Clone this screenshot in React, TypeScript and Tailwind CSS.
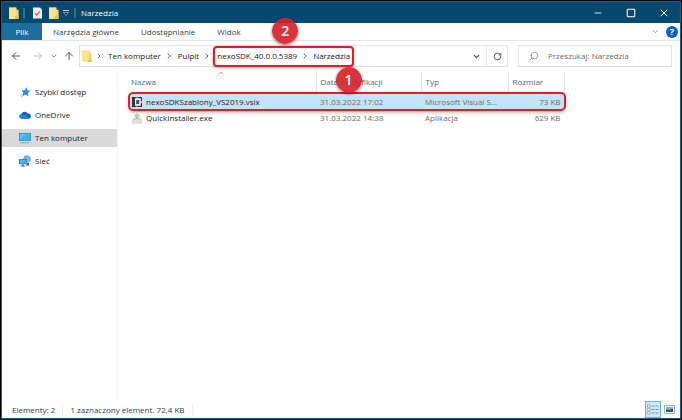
import type { ReactNode } from 'react';
import { ArrowLeft, ArrowRight, ArrowUp, ChevronDown, ChevronRight, ChevronUp, Minus, RotateCw, Search, Square, X } from 'lucide-react';
import clsx from 'clsx';

interface FileEntry {
  name: string;
  modified: string;
  type: string;
  size: string;
  icon: ReactNode;
  selected?: boolean;
}

function FolderIcon() {
  return (
    <svg viewBox="0 0 10 12" className="h-3 w-2.5 shrink-0" aria-hidden>
      <path d="M0 0.6h7.6v2.2H9.6V12H0z" fill="#f6d774" />
      <path d="M0 0.6h6.8V12H0z" fill="#fde291" />
      <path d="M6.8 8.5h2.8V12H5.4z" fill="#edc65a" />
    </svg>
  );
}

function PropertiesIcon() {
  return (
    <svg viewBox="0 0 9 12" className="h-3 w-[9px] shrink-0" aria-hidden>
      <path d="M0 0.5h7l2 2v9H0z" fill="#f4f1ee" />
      <path d="M7 0.5v2h2" fill="#b9c2c9" />
      <path d="M2 6.2l1.8 2L7 4.2" fill="none" stroke="#e0623f" strokeWidth="1.3" />
      <path d="M2 10h5" stroke="#c9c4c0" strokeWidth="0.6" />
    </svg>
  );
}

function StarIcon() {
  return (
    <svg viewBox="0 0 12 12" className="size-3" aria-hidden>
      <path d="M7.6 1l.8 3.2 3.3.6-2.8 2 .6 3.7-2.9-1.9-3.2 1.6 1-3.4-2.2-2.4 3.4-.2z" fill="#2594dc" />
      <path d="M3 7.8L1.4 9.2M3.6 10L2.2 11.2" stroke="#69b9e8" strokeWidth="1" />
    </svg>
  );
}

function CloudIcon() {
  return (
    <svg viewBox="0 0 12 12" className="size-3" aria-hidden>
      <path d="M2.6 9.8a2.5 2.5 0 0 1-.2-4.9A3.5 3.5 0 0 1 8.8 4.6a2.6 2.6 0 0 1 .8 5.2z" fill="#0f62b8" />
      <path d="M2.6 9.8a2.5 2.5 0 0 1-1.8-4l5.4.2 5 3-1.6.8z" fill="#1684d8" />
    </svg>
  );
}

function ComputerIcon() {
  return (
    <svg viewBox="0 0 12 12" className="size-3" aria-hidden>
      <path d="M0 1h12v8H0z" fill="#2587c4" />
      <path d="M.7 1.7h10.6v6.6H.7z" fill="#58c1f5" />
      <path d="M.7 8.3L8 1.7h3.3v6.6z" fill="#43aeea" />
      <path d="M1.5 10.8h9" stroke="#8aa0ad" strokeWidth="1" />
    </svg>
  );
}

function NetworkIcon() {
  return (
    <svg viewBox="0 0 12 12" className="size-3" aria-hidden>
      <circle cx="8" cy="4" r="3.8" fill="#62b4df" />
      <path d="M8 .2c2 1.2 2.6 5 .6 7.6" fill="none" stroke="#9fd4ee" strokeWidth="0.7" />
      <path d="M0 4.2h7.4v5H0z" fill="#1f6f9f" />
      <path d="M.7 4.9h6v3.6h-6z" fill="#4bb9ee" />
      <path d="M3.2 9.2h1.4v1.4h1.6v.8H1.6v-.8h1.6z" fill="#3d6c88" />
      <path d="M8 8h2v2.6H7z" fill="#1c6aa4" />
    </svg>
  );
}

function VsixIcon() {
  return (
    <svg viewBox="0 0 10 10" className="size-2.5 shrink-0" aria-hidden>
      <path d="M0 0h4.6v1.4H3v7.2h1.6V10H0z" fill="#33383d" />
      <path d="M5.4 0H10v4.4H8.6V1.4H5.4zM8.6 6H10v4H5.4V8.6h3.2z" fill="#33383d" />
      <path d="M3 1.4h5.6v7.2H3z" fill="#e8f1f8" />
      <path d="M4.2 3h3v4h-3z" fill="#4a5157" />
    </svg>
  );
}

function InstallerIcon() {
  return (
    <svg viewBox="0 0 10 11" className="h-[11px] w-2.5 shrink-0" aria-hidden>
      <path d="M1 5h8l1 2v3.5H0V7z" fill="#cfd3d4" />
      <path d="M1.2 7.3h7.6v2H1.2z" fill="#e6e8e8" />
      <path d="M3.4 5.8V3.6H1.6L5 .2l3.4 3.4H6.6v2.2z" fill="#a9d49b" />
    </svg>
  );
}

function DetailsViewIcon() {
  return (
    <svg viewBox="0 0 12 11" className="h-[11px] w-3" aria-hidden>
      <g fill="#fff" stroke="#8a969d" strokeWidth="0.7">
        <path d="M.5.8H3v2.4H.5zM.5 4.3H3v2.4H.5z" />
        <path d="M.5 7.8H3v2.4H.5z" stroke="#d28783" />
      </g>
      <path d="M4.5 2h3M8.5 2h3M4.5 5.5h3M8.5 5.5h3M4.5 9h3M8.5 9h3" stroke="#7f99a7" strokeWidth="1" />
    </svg>
  );
}

function ThumbnailViewIcon() {
  return (
    <svg viewBox="0 0 11 9" className="h-[9px] w-[11px]" aria-hidden>
      <path d="M.5.5h10v8H.5z" fill="#fff" stroke="#a9afb3" />
      <path d="M2 2h7v2.6H2z" fill="#6fb3e0" />
      <path d="M2 4.3l3 .4 4-1V7H2z" fill="#31566b" />
    </svg>
  );
}

const FILES: FileEntry[] = [
  {
    name: 'nexoSDKSzablony_VS2019.vsix',
    modified: '31.03.2022 17:02',
    type: 'Microsoft Visual S...',
    size: '73 KB',
    icon: <VsixIcon />,
    selected: true,
  },
  { name: 'QuickInstaller.exe', modified: '31.03.2022 14:38', type: 'Aplikacja', size: '629 KB', icon: <InstallerIcon /> },
];

const PLACES = [
  { label: 'Szybki dostęp', icon: <StarIcon /> },
  { label: 'OneDrive', icon: <CloudIcon /> },
  { label: 'Ten komputer', icon: <ComputerIcon />, active: true },
  { label: 'Sieć', icon: <NetworkIcon /> },
];

function StepBadge({ step, className }: { step: number; className?: string }) {
  return (
    <span
      className={clsx(
        'absolute z-10 flex size-[26px] items-center justify-center rounded-full border border-[#f2202a] bg-[#d3202a]/90 text-[14px] font-semibold text-white shadow-[0_1px_3px_rgba(0,0,0,0.5)]',
        className,
      )}
    >
      {step}
    </span>
  );
}

function TitleBar() {
  return (
    <header className="flex h-[21px] shrink-0 items-center bg-[#07486e] pl-[7px] text-white">
      <FolderIcon />
      <span className="ml-1 h-2.5 w-0.5 bg-[#3a6d8b]" />
      <span className="pl-2"><PropertiesIcon /></span>
      <span className="pl-[7px]"><FolderIcon /></span>
      <svg viewBox="0 0 6 6" className="ml-1 size-1.5" aria-hidden>
        <path d="M0 .5h6" stroke="#c6d6df" />
        <path d="M.5 2.5h5L3 5.5z" fill="#0a2c42" stroke="#c6d6df" strokeWidth="0.6" />
      </svg>
      <span className="mx-[5px] h-2.5 w-0.5 bg-[#3a6d8b]" />
      <h1 className="flex-1">Narzedzia</h1>
      <button type="button" aria-label="Minimalizuj" className="flex w-8 justify-center"><Minus size={10} strokeWidth={2} /></button>
      <button type="button" aria-label="Maksymalizuj" className="flex w-[34px] justify-center">
        <Square size={10} strokeWidth={2.5} strokeLinejoin="miter" />
      </button>
      <button type="button" aria-label="Zamknij" className="flex w-8 justify-center"><X size={12} strokeWidth={2} /></button>
    </header>
  );
}

function Ribbon() {
  return (
    <nav className="flex h-[18px] shrink-0 items-center border-b border-[#e4e5e6] text-[#3c3c3c]">
      <button type="button" className="h-full w-10 bg-[#1f6d9c] text-white">Plik</button>
      <button type="button" className="ml-[11px]">Narzędzia główne</button>
      <button type="button" className="ml-[22px]">Udostępnianie</button>
      <button type="button" className="ml-[22px]">Widok</button>
      <button type="button" aria-label="Rozwiń wstążkę" className="ml-auto text-[#777]"><ChevronDown size={9} /></button>
      <button type="button" aria-label="Pomoc" className="mr-0.5 ml-1.5 flex size-3 items-center justify-center rounded-full bg-[#0b63bd] text-[9px] font-bold text-white">?</button>
    </nav>
  );
}

function AddressBar() {
  const separator = <ChevronRight size={8} strokeWidth={3} className="shrink-0 text-[#6a6a6a]" />;
  return (
    <div className="flex h-[30px] shrink-0 items-center pr-2 pl-2 text-[#222]">
      <button type="button" aria-label="Wstecz" className="text-[#555]"><ArrowLeft size={12} /></button>
      <button type="button" aria-label="Dalej" className="ml-2.5 text-[#c4c4c4]"><ArrowRight size={12} /></button>
      <button type="button" aria-label="Ostatnie lokalizacje" className="ml-1.5 text-[#777]"><ChevronDown size={8} strokeWidth={2.5} /></button>
      <button type="button" aria-label="W górę" className="ml-[5px] text-[#555]"><ArrowUp size={12} /></button>

      <div className="ml-1 flex h-[22px] flex-1 items-center border border-[#e2e2e2]">
        <span className="pr-[3px] pl-0.5"><FolderIcon /></span>
        {separator}
        <button type="button" className="pr-1 pl-[5px]">Ten komputer</button>
        {separator}
        <button type="button" className="pr-1 pl-[5px]">Pulpit</button>
        {separator}
        <div className="relative ml-0.5 flex h-[21px] items-center rounded-sm border-2 border-[#e51c26] shadow-[0_1px_3px_rgba(0,0,0,0.35)]">
          <button type="button" className="pr-1 pl-0.5">nexoSDK_40.0.0.5389</button>
          {separator}
          <button type="button" className="pr-0.5 pl-1">Narzedzia</button>
          <StepBadge step={2} className="-top-[30px] left-[57px]" />
        </div>
        <button type="button" aria-label="Poprzednie lokalizacje" className="mr-[5px] ml-auto text-[#555]"><ChevronDown size={9} strokeWidth={3.5} /></button>
        <button type="button" aria-label="Odśwież" className="flex h-full w-[21px] items-center justify-center border-l border-[#e2e2e2] text-[#555]"><RotateCw size={9} strokeWidth={2.5} /></button>
      </div>

      <label className="ml-2.5 flex h-[22px] w-[154px] items-center border border-[#e2e2e2] pl-2.5">
        <Search size={10} strokeWidth={1.5} className="shrink-0 -scale-x-100 text-[#666]" />
        <input
          type="search"
          aria-label="Przeszukaj"
          placeholder="Przeszukaj: Narzedzia"
          className="ml-[9px] w-full min-w-0 outline-none placeholder:text-[#6d6d6d]"
        />
      </label>
    </div>
  );
}

function Sidebar() {
  return (
    <aside className="w-[116px] shrink-0 border-r border-[#f3f3f3] pt-3">
      <ul className="space-y-[5px]">
        {PLACES.map((place) => (
          <li key={place.label}>
            <a href="#" className={clsx('flex h-[18px] items-center gap-1 pl-[17px]', place.active && 'bg-[#d9d9d9]')}>
              {place.icon}
              {place.label}
            </a>
          </li>
        ))}
      </ul>
    </aside>
  );
}

function FileTable() {
  return (
    <table className="ml-[11px] w-[436px] table-fixed self-start text-left">
      <thead className="text-[#52687c]">
        <tr className="h-[22px] *:border-r *:border-[#e5e5e5] *:font-normal">
          <th className="relative w-[187px] pl-0.5">
            Nazwa
            <ChevronUp size={8} className="absolute -top-0.5 left-[88px] text-[#777]" />
          </th>
          <th className="relative w-[105px] pl-1">
            Data modyfikacji
            <StepBadge step={1} className="-top-1 left-[19px]" />
          </th>
          <th className="w-[87px] pl-1">Typ</th>
          <th className="pl-1">Rozmiar</th>
        </tr>
      </thead>
      <tbody className="text-[#6d6d6d]">
        {FILES.map((file) => (
          <tr
            key={file.name}
            className={clsx(
              file.selected
                ? 'h-[17px] rounded-sm bg-[#c6e2f8] shadow-[0_2px_4px_rgba(0,0,0,0.35)] outline-2 -outline-offset-1 outline-[#e51c26]'
                : 'h-4',
            )}
          >
            <td className="pl-[3px] text-[#1d1d1d]">
              <span className="flex items-center gap-1">
                {file.icon}
                {file.name}
              </span>
            </td>
            <td className="pl-1">{file.modified}</td>
            <td className="pl-1">{file.type}</td>
            <td className="pr-1 text-right">{file.size}</td>
          </tr>
        ))}
      </tbody>
    </table>
  );
}

function StatusBar() {
  return (
    <footer className="flex h-[17px] shrink-0 items-center pr-[3px] pl-2.5 text-[#2d4257]">
      <span className="border-r border-[#eee] pr-[7px]">Elementy: 2</span>
      <span className="border-r border-[#eee] px-[7px]">1 zaznaczony element. 72,4 KB</span>
      <button type="button" aria-label="Szczegóły" className="ml-auto flex h-[17px] w-4 items-center justify-center border border-[#5bb9e5] bg-[#cbe8f6]">
        <DetailsViewIcon />
      </button>
      <button type="button" aria-label="Miniatury" className="flex w-4 justify-center"><ThumbnailViewIcon /></button>
    </footer>
  );
}

export default function App() {
  return (
    <div className='flex min-h-screen flex-col bg-black p-px font-["Open_Sans","Noto_Sans",sans-serif] text-[8px] leading-3 text-[#1d1d1d]'>
      <div className="flex flex-1 flex-col border border-[#145f8c] bg-white">
        <TitleBar />
        <Ribbon />
        <AddressBar />
        <main className="flex flex-1">
          <Sidebar />
          <FileTable />
        </main>
        <StatusBar />
      </div>
    </div>
  );
}
